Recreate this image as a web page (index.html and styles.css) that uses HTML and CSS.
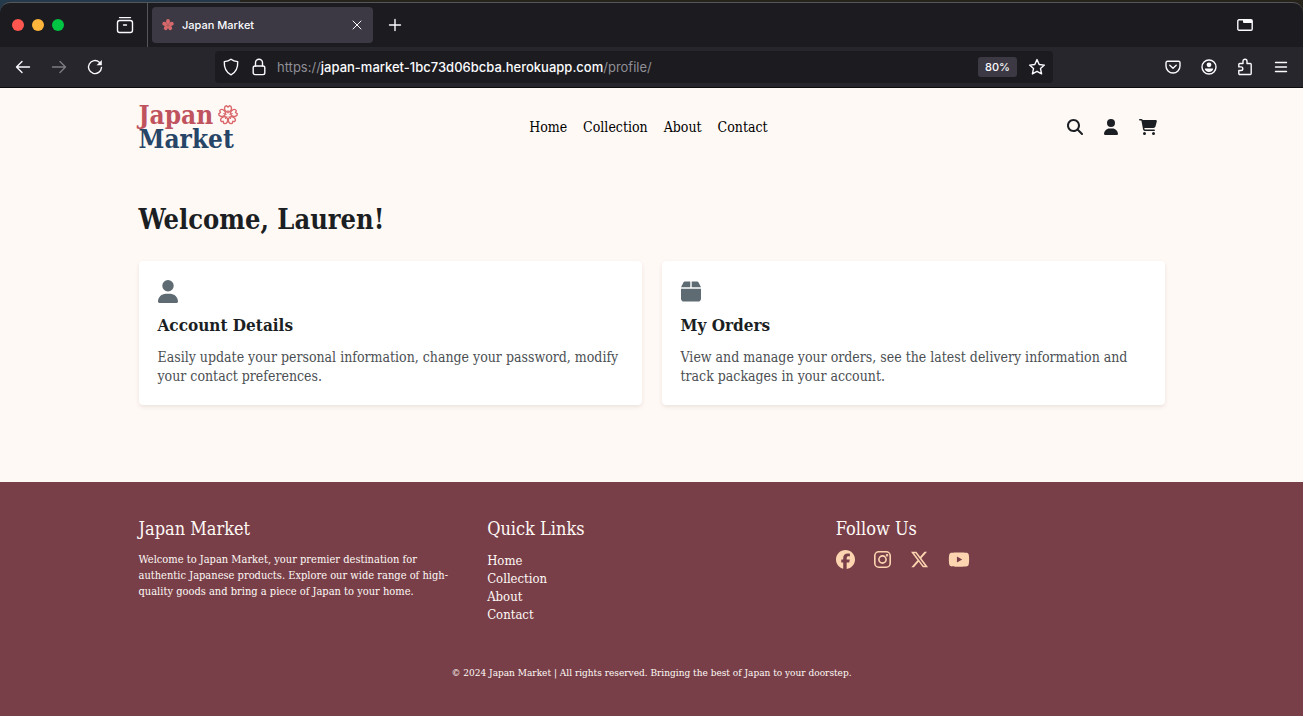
FILE: index.html
```html
<!DOCTYPE html>
<html lang="en">
<head>
<meta charset="utf-8">
<meta name="viewport" content="width=device-width, initial-scale=1">
<title>Japan Market</title>
<link rel="stylesheet" href="styles.css">
</head>
<body>
<div class="browser">
  <div class="tabbar">
    <div class="window-tools">
      <div class="lights"><span class="light red"></span><span class="light amber"></span><span class="light green"></span></div>
      <button class="chrome-btn" aria-label="Recent browsing"><svg width="18" height="18" viewBox="0 0 18 18" class="line"><path d="M3.5 1.6h11"/><rect x="1.5" y="4.5" width="15" height="12" rx="2.2"/><path d="M7.500 9h3"/></svg></button>
    </div>
    <div class="tab">
      <svg width="12" height="12" viewBox="-6 -6 12 12" class="favicon"><ellipse cy="-3.5" rx="2" ry="2.4"/><ellipse cy="-3.5" rx="2" ry="2.4" transform="rotate(72)"/><ellipse cy="-3.5" rx="2" ry="2.4" transform="rotate(144)"/><ellipse cy="-3.5" rx="2" ry="2.4" transform="rotate(216)"/><ellipse cy="-3.5" rx="2" ry="2.4" transform="rotate(288)"/><circle r="1.800"/><circle r=".6" class="favicon-eye"/></svg>
      <span class="tab-title">Japan Market</span>
      <button class="chrome-btn" aria-label="Close tab"><svg width="10" height="10" viewBox="0 0 10 10" class="line thin"><path d="M1 1l8 8M9 1L1 9"/></svg></button>
    </div>
    <button class="chrome-btn" aria-label="New tab"><svg width="14" height="14" viewBox="0 0 14 14" class="line"><path d="M7 1.500v11M1.500 7h11"/></svg></button>
    <button class="chrome-btn list-tabs" aria-label="List all tabs"><svg width="16" height="12" viewBox="0 0 16 12" class="line"><rect x=".8" y=".8" width="14.4" height="10.4" rx="1.2"/><path d="M6 1h9v3H7a1 1 0 0 1-1-1z" class="solid"/></svg></button>
  </div>
  <div class="toolbar">
    <div class="tools">
      <button class="chrome-btn" aria-label="Back"><svg width="16" height="16" viewBox="0 0 16 16" class="line"><path d="M14.500 8H1.500M7 2.500L1.500 8 7 13.500"/></svg></button>
      <button class="chrome-btn faded" aria-label="Forward"><svg width="16" height="16" viewBox="0 0 16 16" class="line"><path d="M1.500 8h13M9 2.500L14.500 8 9 13.500"/></svg></button>
      <button class="chrome-btn" aria-label="Reload"><svg width="16" height="16" viewBox="0 0 16 16" class="line"><path d="M14.500 8.500A6.500 6.500 0 1 1 12.300 3.200"/><path d="M14.800 1v5.200H9.600z" class="solid"/></svg></button>
    </div>
    <div class="urlbar">
      <svg width="16" height="18" viewBox="0 0 16 18" class="line"><path d="M8 1.200C6.300 2.600 4 3.400 1.300 3.600 1 9.500 3 14.300 8 16.800c5-2.500 7-7.300 6.700-13.200C12 3.400 9.700 2.600 8 1.200z"/></svg>
      <svg width="14" height="18" viewBox="0 0 14 18" class="line"><rect x="1.200" y="8" width="11.600" height="8.600" rx="1.800"/><path d="M3.500 8V4.800a3.500 3.500 0 0 1 7 0V8"/></svg>
      <span class="url">https://<span class="host">japan-market-1bc73d06bcba.herokuapp.com</span>/profile/</span>
      <button class="zoom">80%</button>
      <button class="chrome-btn" aria-label="Bookmark"><svg width="18" height="18" viewBox="0 0 18 18" class="line"><path d="M9 1.600l2.200 4.900 5.200.6-3.900 3.500 1.100 5.300L9 13.300l-4.600 2.600 1.100-5.300L1.600 7.100l5.200-.6z"/></svg></button>
    </div>
    <div class="tools">
      <button class="chrome-btn" aria-label="Pocket"><svg width="16" height="16" viewBox="0 0 16 16" class="line"><path d="M2.500 2.200h11a1.500 1.500 0 0 1 1.500 1.500V7A7 7 0 0 1 1 7V3.700a1.500 1.500 0 0 1 1.500-1.500z"/><path d="M4.800 6.300L8 9.300l3.200-3"/></svg></button>
      <button class="chrome-btn" aria-label="Account"><svg width="16" height="16" viewBox="0 0 16 16" class="line"><circle cx="8" cy="8" r="7"/><circle cx="8" cy="5.800" r="2.400" class="solid"/><path d="M3.800 9.500h8.400c0 2-2 3.500-4.200 3.500s-4.200-1.500-4.200-3.500z" class="solid"/></svg></button>
      <button class="chrome-btn" aria-label="Extensions"><svg width="16" height="18" viewBox="0 0 16 18" class="line"><path d="M6 5.500V3.200a2 2 0 0 1 4 0v2.300h3.200a1 1 0 0 1 1 1v9a1 1 0 0 1-1 1H2.800a1 1 0 0 1-1-1V12.500H4a1.800 1.800 0 0 0 0-3.600H1.800V6.500a1 1 0 0 1 1-1z"/></svg></button>
      <button class="chrome-btn" aria-label="Menu"><svg width="14" height="14" viewBox="0 0 14 14" class="line"><path d="M1.500 2.500h11M1.500 7h11M1.500 11.500h11"/></svg></button>
    </div>
  </div>
</div>

<header class="container site-header">
  <a class="logo" href="#">
    <span class="logo-top">Japan
      <svg width="20" height="20" viewBox="-10 -10 20 20" class="blossom"><path d="M-1.200-3C-4.500-5-4-8.800-1.500-9.200L0-8l1.500-1.200C4-8.800 4.500-5 1.200-3z"/><path d="M-1.200-3C-4.500-5-4-8.800-1.500-9.200L0-8l1.500-1.200C4-8.800 4.500-5 1.200-3z" transform="rotate(72)"/><path d="M-1.200-3C-4.500-5-4-8.800-1.500-9.200L0-8l1.500-1.200C4-8.800 4.500-5 1.200-3z" transform="rotate(144)"/><path d="M-1.200-3C-4.500-5-4-8.800-1.500-9.200L0-8l1.500-1.200C4-8.800 4.500-5 1.200-3z" transform="rotate(216)"/><path d="M-1.200-3C-4.500-5-4-8.800-1.500-9.200L0-8l1.500-1.200C4-8.800 4.500-5 1.200-3z" transform="rotate(288)"/><path d="M0-1.500v-3.500M1.400-.5l3.300-1M.9 1.200l2 2.800M-.9 1.200l-2 2.800M-1.400-.5l-3.300-1" class="stamens"/></svg>
    </span>
    <span class="logo-bottom">Market</span>
  </a>
  <nav class="site-nav">
    <a href="#">Home</a><a href="#">Collection</a><a href="#">About</a><a href="#">Contact</a>
  </nav>
  <div class="actions">
    <a href="#" aria-label="Search"><svg width="16" height="16" viewBox="0 0 512 512"><path d="M416 208c0 45.900-14.900 88.300-40 122.700L502.600 457.400c12.500 12.500 12.500 32.800 0 45.300s-32.800 12.500-45.300 0L330.700 376c-34.400 25.200-76.800 40-122.700 40C93.100 416 0 322.900 0 208S93.100 0 208 0S416 93.100 416 208zM208 352a144 144 0 1 0 0-288 144 144 0 1 0 0 288z"/></svg></a>
    <a href="#" aria-label="Profile"><svg width="14" height="16" viewBox="0 0 448 512"><path d="M224 256A128 128 0 1 0 224 0a128 128 0 1 0 0 256zm-45.700 48C79.800 304 0 383.800 0 482.300C0 498.700 13.300 512 29.700 512H418.300c16.400 0 29.700-13.300 29.700-29.700C448 383.800 368.200 304 269.700 304H178.300z"/></svg></a>
    <a href="#" aria-label="Cart"><svg width="18" height="16" viewBox="0 0 576 512"><path d="M0 24C0 10.700 10.700 0 24 0H69.500c22 0 41.500 12.800 50.600 32h411c26.300 0 45.500 25 38.600 50.400l-41 152.300c-8.500 31.400-37 53.300-69.500 53.300H170.700l5.400 28.500c2.200 11.300 12.100 19.500 23.600 19.500H488c13.300 0 24 10.700 24 24s-10.700 24-24 24H199.700c-34.600 0-64.300-24.600-70.700-58.500L77.400 54.500c-.7-3.800-4-6.500-7.900-6.500H24C10.700 48 0 37.300 0 24zM128 464a48 48 0 1 1 96 0 48 48 0 1 1 -96 0zm336-48a48 48 0 1 1 0 96 48 48 0 1 1 0-96z"/></svg></a>
  </div>
</header>

<main class="container main">
  <h1>Welcome, Lauren!</h1>
  <div class="cards">
    <a class="card" href="#">
      <svg width="20" height="23" viewBox="0 0 448 512"><path d="M224 256A128 128 0 1 0 224 0a128 128 0 1 0 0 256zm-45.700 48C79.800 304 0 383.800 0 482.300C0 498.700 13.300 512 29.700 512H418.300c16.400 0 29.700-13.300 29.700-29.700C448 383.800 368.200 304 269.700 304H178.300z"/></svg>
      <h2>Account Details</h2>
      <p>Easily update your personal information, change your password, modify your contact preferences.</p>
    </a>
    <a class="card" href="#">
      <svg width="20" height="23" viewBox="0 0 448 512"><path d="M50.700 58.500L0 160H208V32H93.700C75.500 32 58.900 42.300 50.700 58.500zM240 160H448L397.300 58.500C389.100 42.300 372.500 32 354.300 32H240V160zm208 32H0V416c0 35.300 28.700 64 64 64H384c35.300 0 64-28.700 64-64V192z"/></svg>
      <h2>My Orders</h2>
      <p>View and manage your orders, see the latest delivery information and track packages in your account.</p>
    </a>
  </div>
</main>

<footer class="footer">
  <div class="container">
    <div class="columns">
      <section>
        <h3>Japan Market</h3>
        <p class="about">Welcome to Japan Market, your premier destination for authentic Japanese products. Explore our wide range of high-quality goods and bring a piece of Japan to your home.</p>
      </section>
      <section>
        <h3>Quick Links</h3>
        <ul class="links">
          <li><a href="#">Home</a></li><li><a href="#">Collection</a></li><li><a href="#">About</a></li><li><a href="#">Contact</a></li>
        </ul>
      </section>
      <section>
        <h3>Follow Us</h3>
        <div class="social">
          <a href="#" aria-label="Facebook"><svg width="19" height="19" viewBox="0 0 512 512"><path d="M512 256C512 114.600 397.400 0 256 0S0 114.600 0 256C0 376 82.700 476.800 194.200 504.500V334.200H141.400V256h52.800V222.300c0-87.100 39.400-127.500 125-127.500c16.200 0 44.200 3.200 55.700 6.400V172c-6-.6-16.500-1-29.600-1c-42 0-58.200 15.900-58.200 57.200V256h83.600l-14.400 78.200H287V510.100C413.800 494.800 512 386.900 512 256h0z"/></svg></a>
          <a href="#" aria-label="Instagram"><svg width="17" height="19" viewBox="0 0 17 19" class="insta"><rect x=".8" y="1.800" width="15.400" height="15.400" rx="4"/><circle cx="8.500" cy="9.500" r="3.600"/><circle cx="13" cy="5.200" r=".5"/></svg></a>
          <a href="#" aria-label="X"><svg width="19" height="19" viewBox="0 0 512 512"><path d="M389.200 48h70.600L305.600 224.200 487 464H345L233.700 318.600 106.500 464H35.800L200.700 275.500 26.800 48H172.400L272.900 180.900 389.200 48zM364.400 421.800h39.100L151.100 88h-42L364.400 421.800z"/></svg></a>
          <a href="#" aria-label="YouTube"><svg width="22" height="19" viewBox="0 0 576 512"><path d="M549.655 124.083c-6.281-23.650-24.787-42.276-48.284-48.597C458.781 64 288 64 288 64S117.220 64 74.629 75.486c-23.497 6.322-42.003 24.947-48.284 48.597-11.412 42.867-11.412 132.305-11.412 132.305s0 89.438 11.412 132.305c6.281 23.650 24.787 41.500 48.284 47.821C117.220 448 288 448 288 448s170.780 0 213.371-11.486c23.497-6.321 42.003-24.171 48.284-47.821 11.412-42.867 11.412-132.305 11.412-132.305s0-89.438-11.412-132.305zm-317.510 213.508V175.185l142.739 81.205-142.739 81.201z"/></svg></a>
        </div>
      </section>
    </div>
    <p class="copyright">© 2024 Japan Market | All rights reserved. Bringing the best of Japan to your doorstep.</p>
  </div>
</footer>
</body>
</html>
```
FILE: styles.css
```css
* { box-sizing: border-box; }
body {
  margin: 0;
  min-height: 100vh;
  display: flex;
  flex-direction: column;
  background: #fff9f5;
  color: #1b1f23;
  font-family: "DejaVu Serif Condensed", "DejaVu Serif", serif;
  font-size: 14px;
}
h1, h2, h3, p, ul { margin: 0; }
a { color: inherit; text-decoration: none; }
svg { display: block; flex: none; fill: currentColor; }
button { font: inherit; color: inherit; border: 0; background: none; padding: 0; }

/* Browser window */
.browser {
  padding-top: 2px;
  background: linear-gradient(90deg, #24394a 240px, #26241a 240px);
  color: #fbfbfe;
  font-family: Inter, sans-serif;
  border-bottom: 1px solid #0c0c0d;
}
.tabbar {
  display: flex;
  align-items: center;
  height: 45px;
  padding-right: 44px;
  background: #1c1b20;
  border-top: 1px solid #55565a;
  border-radius: 10px 10px 0 0;
}
.window-tools {
  display: flex;
  align-items: center;
  gap: 47px;
  height: 100%;
  padding: 0 8px 0 12px;
  border-right: 1px solid #55565a;
}
.lights { display: flex; gap: 8px; }
.light { width: 12px; height: 12px; border-radius: 50%; }
.red { background: #ff5650; }
.amber { background: #ffb43c; }
.green { background: #00c543; }
.line { fill: none; stroke: currentColor; stroke-width: 1.4; stroke-linecap: round; stroke-linejoin: round; }
.thin { stroke-width: 1; }
.solid { fill: currentColor; stroke: none; }
.chrome-btn { display: flex; align-items: center; justify-content: center; width: 28px; height: 28px; }
.tab {
  display: flex;
  align-items: center;
  gap: 8px;
  width: 221px;
  height: 36px;
  margin: 0 8px 0 4px;
  padding: 0 2px 0 10px;
  border-radius: 4px;
  background: #3c3944;
  font-size: 11px;
  font-weight: 500;
}
.favicon { color: #d5686a; }
.favicon-eye { fill: #3c3944; }
.tab-title { flex: 1; }
.list-tabs { margin-left: auto; }
.toolbar {
  display: flex;
  align-items: center;
  height: 40px;
  padding: 0 8px 0 9px;
  background: #27262c;
}
.tools { display: flex; gap: 8px; }
.faded { opacity: 0.4; }
.urlbar {
  flex: 1;
  display: flex;
  align-items: center;
  height: 32px;
  margin: 0 106px;
  padding: 0 2px 0 8px;
  border-radius: 4px;
  background: #1c1b20;
}
.url { flex: 1; margin-left: 11px; color: #8f8f95; font-size: 13px; white-space: nowrap; }
.urlbar > svg + svg { margin-left: 13px; }
.host { color: #fbfbfe; font-weight: 500; }
.zoom { height: 20px; margin-right: 6px; padding: 0 7px; border-radius: 3px; background: #3c3944; font-size: 11px; font-weight: 500; }

/* Site */
.container { width: 100%; max-width: 1056px; margin: 0 auto; padding: 0 15px; }
.site-header { display: flex; align-items: center; justify-content: space-between; padding-top: 15px; padding-bottom: 15px; }
.logo { display: flex; flex-direction: column; font-weight: bold; font-size: 26px; line-height: 24px; }
.logo-top { display: flex; align-items: center; gap: 5px; color: #bf545f; }
.logo-bottom { color: #274566; }
.blossom { fill: none; stroke: #d9696b; stroke-width: 1.4; }
.stamens { stroke-width: 1; }
.site-nav { display: flex; gap: 16px; color: #000; }
.actions { display: flex; gap: 21px; padding: 0 8px; }
.main { padding-top: 37px; padding-bottom: 77px; }
h1 { font-size: 27px; line-height: 34px; }
.cards { display: grid; grid-template-columns: 1fr 1fr; gap: 20px; margin-top: 24px; }
.card {
  padding: 19px;
  border-radius: 4px;
  background: #fff;
  box-shadow: 0 2px 4px rgba(60, 30, 20, 0.1);
}
.card svg { color: #5f6b72; }
.card h2 { margin-top: 12px; font-size: 17px; line-height: 20px; }
.card p { margin-top: 13px; color: #4b4f53; line-height: 19px; }

/* Footer */
.footer { flex: 1; padding: 36px 0; background: #783f49; color: #fff9f5; }
.columns { display: grid; grid-template-columns: repeat(3, 1fr); gap: 20px; }
h3 { font-size: 18px; line-height: 22px; font-weight: normal; }
.about { margin-top: 12px; padding-right: 16px; font-size: 11px; line-height: 16px; }
.links { margin-top: 12px; padding: 0; list-style: none; font-size: 13px; line-height: 18px; }
.social { display: flex; gap: 19px; margin-top: 10px; color: #fcd5b0; }
.insta { fill: none; stroke: currentColor; stroke-width: 1.6; }
.copyright { margin-top: 42px; text-align: center; font-size: 10px; line-height: 14px; }
```
